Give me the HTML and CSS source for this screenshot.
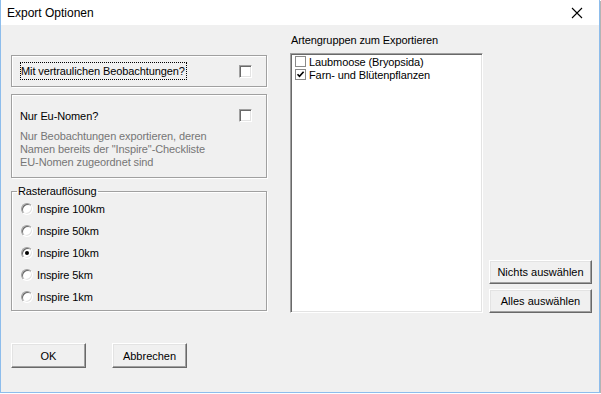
FILE: index.html
```html
<!DOCTYPE html>
<html lang="de">
<head>
  <meta charset="UTF-8">
  <title>Export Optionen</title>
  <link rel="stylesheet" href="styles.css">
</head>
<body>
  <div class="window">
    <div class="titlebar">
      <span class="title">Export Optionen</span>
      <svg class="close" width="12" height="12" viewBox="0 0 12 12">
        <path d="M1 1 L11 11 M11 1 L1 11" stroke="#000" stroke-width="1.1" fill="none"/>
      </svg>
    </div>
    <div class="client">
      <div class="main">
        <div class="left">
          <div class="group group-confidential">
            <span class="focus">Mit vertraulichen Beobachtungen?</span>
            <span class="check"></span>
          </div>
          <div class="group group-eu">
            <div class="eu-row">
              <span>Nur Eu-Nomen?</span>
              <span class="check"></span>
            </div>
            <p class="hint">Nur Beobachtungen exportieren, deren<br>Namen bereits der "Inspire"-Checkliste<br>EU-Nomen zugeordnet sind</p>
          </div>
          <fieldset class="raster">
            <legend>Rasterauflösung</legend>
            <div class="radio-row"><span class="radio"></span>Inspire 100km</div>
            <div class="radio-row"><span class="radio"></span>Inspire 50km</div>
            <div class="radio-row"><span class="radio checked"></span>Inspire 10km</div>
            <div class="radio-row"><span class="radio"></span>Inspire 5km</div>
            <div class="radio-row"><span class="radio"></span>Inspire 1km</div>
          </fieldset>
        </div>
        <div class="right">
          <div class="list-label">Artengruppen zum Exportieren</div>
          <div class="list-area">
            <div class="listbox">
              <div class="list-item"><span class="box"></span>Laubmoose (Bryopsida)</div>
              <div class="list-item">
                <span class="box">
                  <svg width="9" height="9" viewBox="0 0 9 9"><path d="M1.5 4.2 L3.5 6.4 L7.6 1.8" stroke="#000" stroke-width="1.6" fill="none"/></svg>
                </span>Farn- und Blütenpflanzen
              </div>
            </div>
            <div class="list-buttons">
              <button class="btn btn-wide">Nichts auswählen</button>
              <button class="btn btn-wide">Alles auswählen</button>
            </div>
          </div>
        </div>
      </div>
      <div class="footer">
        <button class="btn btn-dialog">OK</button>
        <button class="btn btn-dialog">Abbrechen</button>
      </div>
    </div>
  </div>
</body>
</html>
```

FILE: styles.css
```css
body {
  margin: 0;
  padding: 0;
  background-color: #fff;
  font-family: "Liberation Sans", Arial, sans-serif;
  font-size: 11px;
  letter-spacing: -0.1px;
  color: #000;
}
.window {
  width: 600px;
  height: 393px;
  box-sizing: border-box;
  border: 1px solid #8dbdec;
  border-top: none;
  background-color: #f0f0f0;
  box-shadow: 1px 1px 0 #b4b4b4;
  display: flex;
  flex-direction: column;
}
.titlebar {
  height: 25px;
  background-color: #fff;
  display: flex;
  align-items: center;
  justify-content: space-between;
  padding: 0 16px 0 6px;
}
.title {
  font-size: 12px;
  letter-spacing: 0;
}
.close {
  display: block;
}
.client {
  padding: 9px 0 0 10px;
}
.main {
  display: flex;
  gap: 23px;
}
.left {
  width: 256px;
  margin-top: 21px;
}
.group {
  box-sizing: border-box;
  border: 1px solid #a0a0a0;
  box-shadow: inset 1px 1px 0 #fff, 1px 1px 0 #fff;
}
.group-confidential {
  height: 32px;
  display: flex;
  align-items: center;
  justify-content: space-between;
  padding: 0 14px 0 8px;
}
.focus {
  border: 1px dotted #000;
  padding: 1px 1px 1px 0;
  line-height: 14px;
}
.check {
  width: 13px;
  height: 13px;
  box-sizing: border-box;
  background-color: #fff;
  border: 1px solid;
  border-color: #a0a0a0 #fff #fff #a0a0a0;
  box-shadow: inset 1px 1px 0 #696969, inset -1px -1px 0 #e3e3e3;
}
.group-eu {
  margin-top: 7px;
  height: 84px;
  padding: 14px 14px 0 8px;
}
.eu-row {
  display: flex;
  align-items: center;
  justify-content: space-between;
  height: 13px;
}
.hint {
  margin: 8px 0 0;
  line-height: 13px;
  color: #767676;
}
.raster {
  margin: 7px 0 0;
  padding: 0 0 2px 9px;
  border: 1px solid #a0a0a0;
  box-shadow: inset 1px 1px 0 #fff, 1px 1px 0 #fff;
}
.raster legend {
  margin-left: -4px;
  padding: 0 1px;
  line-height: 13px;
}
.radio-row {
  height: 22px;
  display: flex;
  align-items: center;
  gap: 4px;
}
.radio {
  width: 12px;
  height: 12px;
  box-sizing: border-box;
  border-radius: 50%;
  background-color: #fff;
  border: 1px solid;
  border-color: #a0a0a0 #fff #fff #a0a0a0;
  box-shadow: inset 1px 1px 0 #696969, inset -1px -1px 0 #e3e3e3;
  display: flex;
  align-items: center;
  justify-content: center;
}
.radio.checked::after {
  content: "";
  width: 4px;
  height: 4px;
  border-radius: 50%;
  background-color: #000;
}
.right {
  display: flex;
  flex-direction: column;
}
.list-label {
  line-height: 13px;
  padding-left: 1px;
}
.list-area {
  display: flex;
  align-items: flex-end;
  gap: 6px;
  margin-top: 6px;
}
.listbox {
  width: 193px;
  height: 260px;
  box-sizing: border-box;
  background-color: #fff;
  border: 1px solid;
  border-color: #a0a0a0 #fff #fff #a0a0a0;
  box-shadow: inset 1px 1px 0 #696969, inset -1px -1px 0 #e3e3e3;
  padding: 1px 0 0 4px;
}
.list-item {
  height: 13px;
  display: flex;
  align-items: center;
  gap: 3px;
}
.box {
  width: 11px;
  height: 11px;
  box-sizing: border-box;
  border: 1px solid #8a8a8a;
  display: flex;
  align-items: center;
  justify-content: center;
}
.box svg {
  display: block;
}
.list-buttons {
  display: flex;
  flex-direction: column;
  gap: 5px;
}
.btn {
  font-family: "Liberation Sans", Arial, sans-serif;
  font-size: 11px;
  color: #000;
  background-color: #f0f0f0;
  box-sizing: border-box;
  border: 1px solid;
  border-color: #fff #696969 #696969 #fff;
  box-shadow: inset -1px -1px 0 #a0a0a0, inset 1px 1px 0 #e3e3e3;
  padding: 0;
}
.btn-wide {
  width: 103px;
  height: 24px;
}
.footer {
  display: flex;
  gap: 26px;
  margin-top: 30px;
}
.btn-dialog {
  width: 75px;
  height: 25px;
}
```
